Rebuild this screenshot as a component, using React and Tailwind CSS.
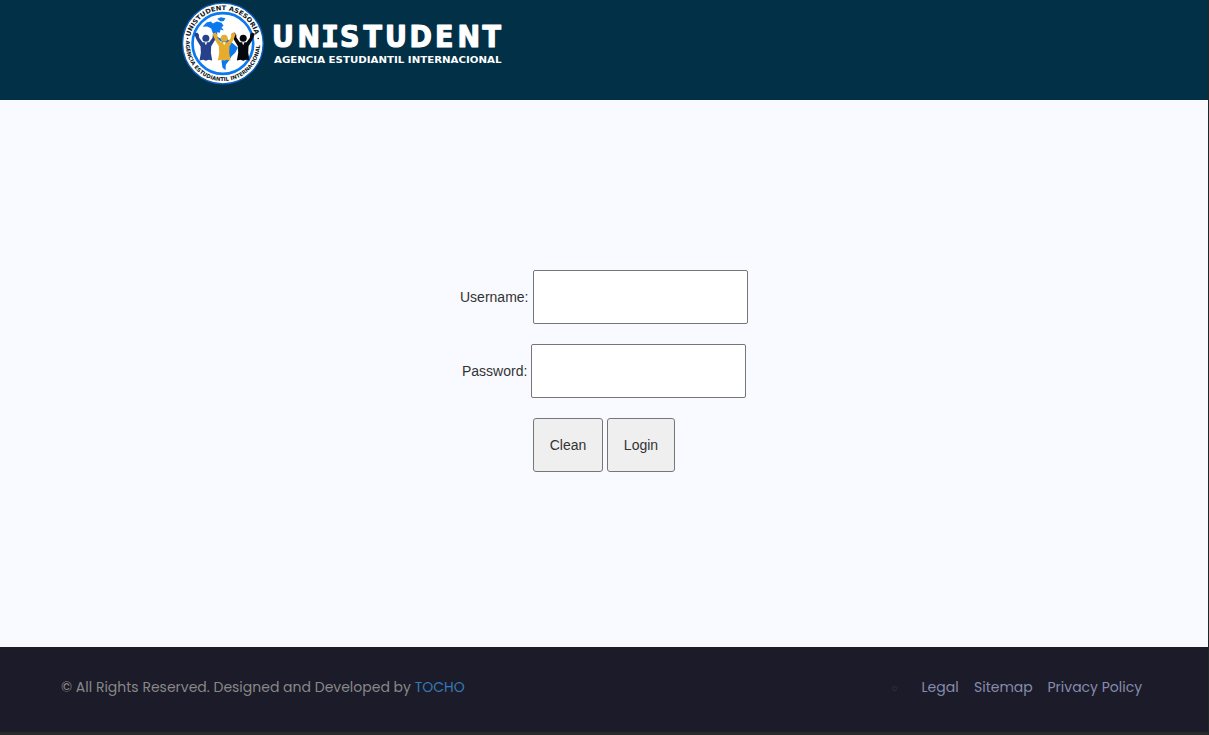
const capitals = [
  ['U', 272], ['N', 297.5], ['S', 340], ['T', 363.5], ['U', 385],
  ['D', 409.5], ['E', 435], ['N', 457.5], ['T', 482.5],
];

function Figure({ x, color }) {
  return (
    <g transform={`translate(${x} 0)`} fill={color}>
      <circle cx="0" cy="114" r="10.5" />
      <path d="M-35 101 L-26 97 L-21 103 L-20 113 L-10 126 L10 126 L20 113 L21 103 L26 97 L35 101 L31 111 L27 120 L16 138 L15 158 L19 181 L8 179 L0 182 L-8 179 L-19 181 L-15 158 L-16 138 L-27 120 L-31 111 Z" />
      <path d="M-4 126 L0 135 L4 126 Z" fill="#fff" />
    </g>
  );
}

function Logo() {
  return (
    <svg className="block h-[100px] w-[330px]" viewBox="175 0 330 100" role="img" aria-label="Unistudent">
      <defs>
        <path id="lower" d="M32.5 121 A111 111 0 1 0 253.5 121" />
        <path id="rim" d="M45 110 A100 100 0 0 1 241 110" />
      </defs>
      <g transform="translate(175.2 .2) scale(.33333)">
        <circle cx="143" cy="130" r="121" fill="#fff" stroke="#1260bd" strokeWidth="4" />
        <circle cx="143" cy="130" r="91" fill="#fff" stroke="#0b78ee" strokeWidth="8" />
        <g fill="#0b78ee">
          <path d="M82 80 L94 67 L107 64 L113 70 L125 64 L139 68 L145 77 L139 81 L146 91 L136 88 L134 98 L126 96 L124 107 L130 112 L139 116 L146 124 L137 124 L121 112 L112 97 L108 85 L96 79 Z" />
          <path d="M126 56 L137 51 L151 54 L145 63 L135 63 Z" />
          <path d="M141 122 L154 116 L164 122 L176 132 L188 143 L180 158 L169 168 L161 182 L152 193 L151 210 L142 203 L139 184 L143 158 L136 143 Z" />
        </g>
        <Figure x={92} color="#27408b" />
        <Figure x={204} color="#05080d" />
        <Figure x={147} color="#e8ac2d" />
        <g fill="#111923" fontFamily="'DejaVu Sans', sans-serif" fontWeight="700">
          <text fontSize="19">
            <textPath href="#rim" textLength="268" lengthAdjust="spacingAndGlyphs">UNISTUDENT ASESORÍA</textPath>
          </text>
          <text fontSize="16">
            <textPath href="#lower" textLength="356" lengthAdjust="spacingAndGlyphs">AGENCIA ESTUDIANTIL INTERNACIONAL</textPath>
          </text>
        </g>
        <circle cx="37" cy="115" r="2.5" fill="#111923" />
        <circle cx="249" cy="115" r="2.5" fill="#111923" />
      </g>
      <g fill="#fff" fontWeight="700" fontSize="30" stroke="#fff" strokeWidth="1.1" strokeLinejoin="round">
        <g fontFamily="'DejaVu Sans Condensed', 'DejaVu Sans', sans-serif" fontStretch="condensed">
          {capitals.map(([letter, x]) => <text key={x} x={x} y="46.5">{letter}</text>)}
        </g>
        <text x="321" y="46.5" fontFamily="'DejaVu Sans Mono', monospace">I</text>
      </g>
      <text x="274" y="63" fill="#fff" fontFamily="'DejaVu Sans', sans-serif" fontWeight="700" fontSize="9.3" textLength="227.5" lengthAdjust="spacingAndGlyphs">
        AGENCIA ESTUDIANTIL INTERNACIONAL
      </text>
    </svg>
  );
}

const field = 'h-[54px] w-[215px] rounded-[2px] border border-[#767676] bg-white px-4 outline-none';
const button = 'h-[54px] rounded-[3px] border border-[#767676] bg-[#efefef]';

export default function App() {
  return (
    <div className="h-[735px] w-[1209px] border-r border-[#202528] bg-[#f9faff] font-['Liberation_Sans',Arial,sans-serif] text-sm text-[#333]">
      <div className="flex h-full flex-col">
        <header className="h-[100px] shrink-0 bg-[#023047] pl-[175px]">
          <Logo />
        </header>
        <main className="flex-1 pt-[170px]">
          <form className="flex flex-col items-center gap-5" onSubmit={(e) => e.preventDefault()}>
            <label className="flex items-center gap-1">
              <span className="w-[69px] whitespace-nowrap">Username:</span>
              <input className={field} />
            </label>
            <label className="flex items-center gap-1">
              <span className="w-[65px] whitespace-nowrap">Password:</span>
              <input type="password" className={field} />
            </label>
            <div className="flex gap-1">
              <button type="reset" className={`${button} w-[70px]`}>Clean</button>
              <button type="submit" className={`${button} w-[68px]`}>Login</button>
            </div>
          </form>
        </main>
        <footer className="flex h-[88px] shrink-0 items-center justify-between border-b-[3px] border-[#29292b] bg-[#1b1b29] pb-1.5 pl-[61px] pr-[66px] font-[Poppins,Inter,sans-serif]">
          <p className="whitespace-nowrap text-[#888]">
            © All Rights Reserved. Designed and Developed by <a className="text-[#337ab7]">TOCHO</a>
          </p>
          <nav className="flex items-center text-[#868cab]">
            <span className="mr-[25px] mt-1 size-[5px] rounded-full border border-[#30313a]" />
            <a className="w-[52.5px]">Legal</a>
            <a className="w-[73.5px]">Sitemap</a>
            <a className="w-[94.5px] whitespace-nowrap">Privacy Policy</a>
          </nav>
        </footer>
      </div>
    </div>
  );
}
